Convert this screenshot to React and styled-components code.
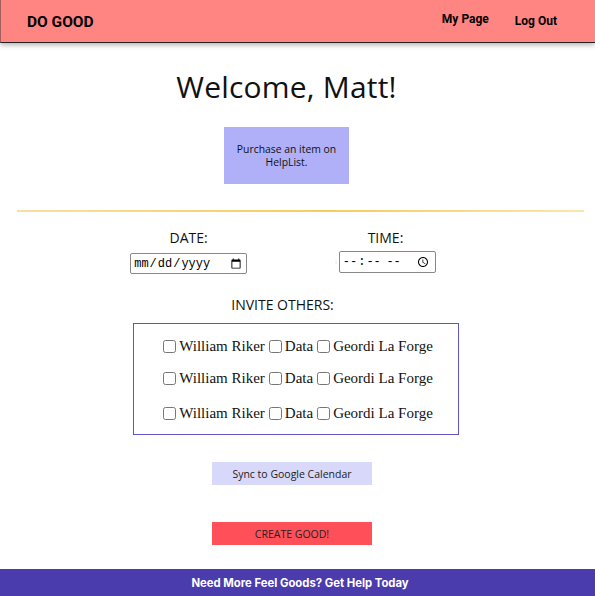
import React from 'react';
import styled, { createGlobalStyle } from 'styled-components';

const colors = {
  salmon: '#ff8582',
  lavender: '#b0b0f8',
  paleLavender: '#d8d8fa',
  red: '#ff5059',
  indigo: '#4b3cae',
  frame: '#5f55c4',
  gold: '#f7cb5c',
  black: '#111111',
};

const GlobalStyle = createGlobalStyle`
  html, body { margin: 0; padding: 0; background: #fff; }
  body { font-family: "Open Sans", "DejaVu Sans", sans-serif; color: ${colors.black}; }
`;

const Page = styled.div`
  min-height: 596px;
  display: flex;
  flex-direction: column;
`;

const Header = styled.header`
  height: 42px;
  display: flex;
  align-items: center;
  justify-content: space-between;
  padding: 0 38px 0 26px;
  background: ${colors.salmon};
  border-left: 1px solid #a06060;
  border-bottom: 1px solid #222;
  box-shadow: 0 2px 5px rgba(0, 0, 0, 0.3);
  font-family: Roboto, "Liberation Sans", sans-serif;
  font-weight: 700;
`;

const Brand = styled.div`
  font-size: 15.5px;
  color: #000;
  margin-top: 1px;
`;

const Nav = styled.nav`
  display: flex;
  gap: 26px;
  font-size: 12px;
`;

const NavLink = styled.span`
  color: #000;
  margin-top: ${p => p.$lift || 0}px;
`;

const Main = styled.main`
  display: flex;
  flex-direction: column;
  align-items: center;
  flex: 1;
`;

const Title = styled.h1`
  margin: 23px 0 0 -22px;
  font-size: 30px;
  font-weight: 400;
  letter-spacing: 0.2px;
`;

const Prompt = styled.div`
  margin: 20px 0 0 -22px;
  width: 125px;
  height: 57px;
  display: flex;
  align-items: center;
  justify-content: center;
  text-align: center;
  background: ${colors.lavender};
  font-size: 10.4px;
  line-height: 13px;
  padding: 0 8px;
  box-sizing: border-box;
`;

const Rule = styled.hr`
  align-self: stretch;
  margin: 26px 11px 0 17px;
  border: 0;
  height: 2px;
  background: linear-gradient(90deg, #f9e0a0, ${colors.gold} 55%, #fbe6b0);
`;

const Schedule = styled.div`
  display: flex;
  gap: 88px;
  margin-top: 18px;
  margin-left: -29px;
`;

const Field = styled.div`
  display: flex;
  flex-direction: column;
  align-items: center;
  gap: ${p => p.$gap}px;
`;

const Label = styled.div`
  font-size: 14px;
  line-height: 16px;
`;

const InputRow = styled.div`
  display: flex;
  align-items: center;
  gap: 2px;
`;

const Dot = styled.span`
  font-size: 6px;
  color: #aaa;
`;

const NativeInput = styled.input`
  font-family: "Liberation Mono", monospace;
  font-size: 12px;
  height: ${p => p.$h}px;
  box-sizing: border-box;
  width: ${p => p.$w}px;
  border: 1px solid #888;
  border-radius: 2px;
  padding: 0 2px;
`;

const InviteLabel = styled(Label)`
  margin-top: 23px;
  margin-left: -30px;
`;

const InviteBox = styled.div`
  margin-top: 10px;
  margin-left: -3px;
  width: 326px;
  height: 112px;
  box-sizing: border-box;
  border: 1px solid ${colors.frame};
  display: flex;
  flex-direction: column;
  align-items: center;
  padding-top: 12px;
  font-family: "Liberation Serif", serif;
  font-size: 15px;
`;

const InviteRow = styled.div`
  display: flex;
  align-items: center;
  height: 20px;
  margin-bottom: ${p => p.$gap}px;
`;

const Guest = styled.label`
  display: inline-flex;
  align-items: center;
  & input { margin: 0 3px 0 4px; width: 13px; height: 13px; }
`;

const ActionButton = styled.button`
  width: 160px;
  height: 23px;
  border: 0;
  background: ${p => p.$bg};
  font-family: "Open Sans", sans-serif;
  font-size: 10.5px;
  color: #222;
  margin-top: ${p => p.$top}px;
  margin-left: -11px;
  padding: 0;
`;

const Footer = styled.footer`
  height: 27px;
  margin-top: auto;
  background: ${colors.indigo};
  color: #fff;
  display: flex;
  align-items: center;
  justify-content: center;
  padding-left: 5px;
  font-family: Inter, Roboto, sans-serif;
  font-weight: 700;
  font-size: 11.3px;
`;

const guests = ['William Riker', 'Data', 'Geordi La Forge'];

export default function App() {
  return (
    <Page>
      <GlobalStyle />
      <Header>
        <Brand>DO GOOD</Brand>
        <Nav>
          <NavLink $lift={-2}>My Page</NavLink>
          <NavLink>Log Out</NavLink>
        </Nav>
      </Header>
      <Main>
        <Title>Welcome, Matt!</Title>
        <Prompt>Purchase an item on HelpList.</Prompt>
        <Rule />
        <Schedule>
          <Field $gap={7}>
            <Label>DATE:</Label>
            <InputRow>
              <NativeInput type="date" $w={117} $h={21} />
            </InputRow>
          </Field>
          <Field $gap={5}>
            <Label>TIME:</Label>
            <InputRow>
              <Dot>:</Dot>
              <NativeInput type="time" $w={97} $h={22} />
            </InputRow>
          </Field>
        </Schedule>
        <InviteLabel>INVITE OTHERS:</InviteLabel>
        <InviteBox>
          {[12, 15, 0].map((gap, i) => (
            <InviteRow key={i} $gap={gap}>
              {guests.map(g => (
                <Guest key={g}>
                  <input type="checkbox" />
                  {g}
                </Guest>
              ))}
            </InviteRow>
          ))}
        </InviteBox>
        <ActionButton $bg={colors.paleLavender} $top={27}>Sync to Google Calendar</ActionButton>
        <ActionButton $bg={colors.red} $top={37}>CREATE GOOD!</ActionButton>
      </Main>
      <Footer>Need More Feel Goods? Get Help Today</Footer>
    </Page>
  );
}
